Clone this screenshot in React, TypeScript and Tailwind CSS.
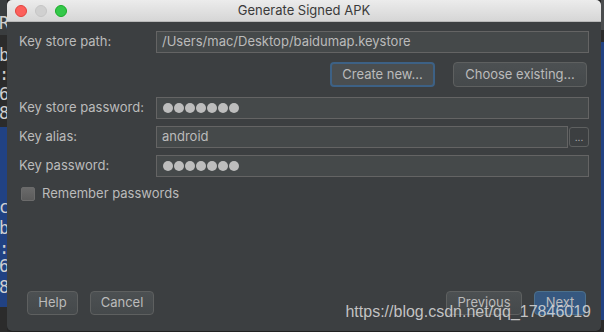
import type { ReactNode } from 'react'

const font = { fontFamily: 'Inter, "Noto Sans", sans-serif' }

function Dots() {
  return (
    <div className="flex gap-[1px]">
      {[0, 1, 2, 3, 4, 5, 6].map((i) => (
        <span key={i} className="h-[10px] w-[10px] rounded-full bg-[#bdbdbd]" />
      ))}
    </div>
  )
}

function Field({ children, className = '' }: { children?: ReactNode; className?: string }) {
  return (
    <div
      className={`flex h-[22px] items-center border border-[#646464] bg-[#45494a] px-[6px] text-[13px] text-[#bbbbbb] ${className}`}
    >
      {children}
    </div>
  )
}

function Row({ label, children }: { label: string; children: ReactNode }) {
  return (
    <div className="flex items-center">
      <div className="w-[137px] shrink-0 text-[13px] text-[#bbbbbb]">{label}</div>
      <div className="flex min-w-0 flex-1 items-center">{children}</div>
    </div>
  )
}

type Kind = 'default' | 'primary' | 'focus'

function Btn({ children, className = '', kind = 'default' }: { children: ReactNode; className?: string; kind?: Kind }) {
  const look =
    kind === 'primary'
      ? 'border border-[#4c708c] bg-[#365880]'
      : kind === 'focus'
        ? 'border-2 border-[#3d6185] bg-[#4a4e50]'
        : 'border border-[#5e6060] bg-gradient-to-b from-[#4c5052] to-[#45494b]'
  return (
    <button
      type="button"
      className={`flex h-[24px] items-center justify-center rounded-[4px] text-[13px] text-[#bbbbbb] ${look} ${className}`}
    >
      {children}
    </button>
  )
}

function Strip({ chars, side }: { chars: { y: number; c: string }[]; side: 'left' | 'right' }) {
  return (
    <div className="relative h-full w-full overflow-hidden bg-[#2b2b2b]">
      {side === 'left' ? (
        <>
          <div className="h-[35px] bg-[#3a3d3f]" />
          <div className="h-[92px] bg-[#2b2b2b]" />
          <div className="h-[180px] bg-[#214283]" />
        </>
      ) : (
        <>
          <div className="h-[30px] bg-[#4a4c4e]" />
          <div className="h-[12px] bg-[#2b2b2b]" />
          <div className="h-[278px] bg-[#214283]" />
        </>
      )}
      {chars.map((ch, i) => (
        <span
          key={i}
          className="absolute left-[-1px] text-[17px] leading-none text-[#d0d0d0]"
          style={{ top: ch.y, fontFamily: '"DejaVu Sans Mono", monospace' }}
        >
          {ch.c}
        </span>
      ))}
    </div>
  )
}

export default function App() {
  return (
    <div className="flex h-[332px] w-[604px] overflow-hidden bg-[#2b2b2b]" style={font}>
      <div className="h-full w-[7px] shrink-0">
        <Strip
          side="left"
          chars={[
            { y: 15, c: 'R' },
            { y: 47, c: 'b' },
            { y: 66, c: ':' },
            { y: 86, c: '6' },
            { y: 105, c: '8' },
            { y: 199, c: 'c' },
            { y: 220, c: 'b' },
            { y: 240, c: ':' },
            { y: 258, c: '6' },
            { y: 279, c: '8' },
          ]}
        />
      </div>

      <div className="flex h-[331px] w-[594px] shrink-0 flex-col overflow-hidden rounded-[5px] bg-[#3c3f41] shadow-[0_0_3px_rgba(0,0,0,0.6)]">
        <div className="relative flex h-[22px] shrink-0 items-center justify-center border-b border-[#b8b8b8] bg-gradient-to-b from-[#ececec] to-[#d6d6d6]">
          <div className="absolute left-[8px] top-[5px] flex gap-[8px]">
            <span className="h-[12px] w-[12px] rounded-full border border-[#e0443e] bg-[#fc605c]" />
            <span className="h-[12px] w-[12px] rounded-full border border-[#c5c5c5] bg-[#d0d0d0]" />
            <span className="h-[12px] w-[12px] rounded-full border border-[#1aab29] bg-[#34c84a]" />
          </div>
          <span className="text-[13px] text-[#3a3a3a]">Generate Signed APK</span>
        </div>

        <div className="flex flex-1 flex-col pl-[12px] pr-[12px] pt-[9px] pb-[16px]">
          <Row label="Key store path:">
            <Field className="flex-1 pl-[5px]">/Users/mac/Desktop/baidumap.keystore</Field>
          </Row>

          <div className="mt-[9px] flex justify-end gap-[18px] pr-[2px]">
            <Btn kind="focus" className="h-[25px] w-[105px]">
              Create new...
            </Btn>
            <Btn className="h-[25px] w-[134px]">Choose existing...</Btn>
          </div>

          <div className="mt-[10px] flex flex-col gap-[7px]">
            <Row label="Key store password:">
              <Field className="flex-1">
                <Dots />
              </Field>
            </Row>
            <Row label="Key alias:">
              <Field className="flex-1 pl-[5px]">android</Field>
              <button
                type="button"
                className="ml-[1px] flex h-[20px] w-[20px] items-center justify-center rounded-[3px] border border-[#5e6060] bg-[#3c3f41] text-[10px] leading-none text-[#bbbbbb]"
              >
                ...
              </button>
            </Row>
            <Row label="Key password:">
              <Field className="flex-1">
                <Dots />
              </Field>
            </Row>
          </div>

          <div className="mt-[7px] flex items-center gap-[7px] pl-[2px]">
            <span className="h-[14px] w-[14px] rounded-[2px] border border-[#6b6b6b] bg-gradient-to-b from-[#6a6a6a] to-[#5b5b5b]" />
            <span className="text-[13px] text-[#bbbbbb]">Remember passwords</span>
          </div>

          <div className="mt-auto flex items-center pl-[8px] pr-[3px]">
            <Btn className="w-[51px]">Help</Btn>
            <Btn className="ml-[12px] w-[64px]">Cancel</Btn>
            <div className="relative ml-auto flex gap-[12px]">
              <Btn className="w-[76px]">Previous</Btn>
              <Btn kind="primary" className="w-[52px]">
                Next
              </Btn>
              <span
                className="absolute right-[-5px] top-[13px] whitespace-nowrap text-[16px] leading-none text-[#dcdcdc]/85"
                style={{ fontFamily: '"Liberation Sans", Arial, sans-serif' }}
              >
                https://blog.csdn.net/qq_17846019
              </span>
            </div>
          </div>
        </div>
      </div>

      <div className="h-full w-[3px] shrink-0">
        <Strip side="right" chars={[]} />
      </div>
    </div>
  )
}
